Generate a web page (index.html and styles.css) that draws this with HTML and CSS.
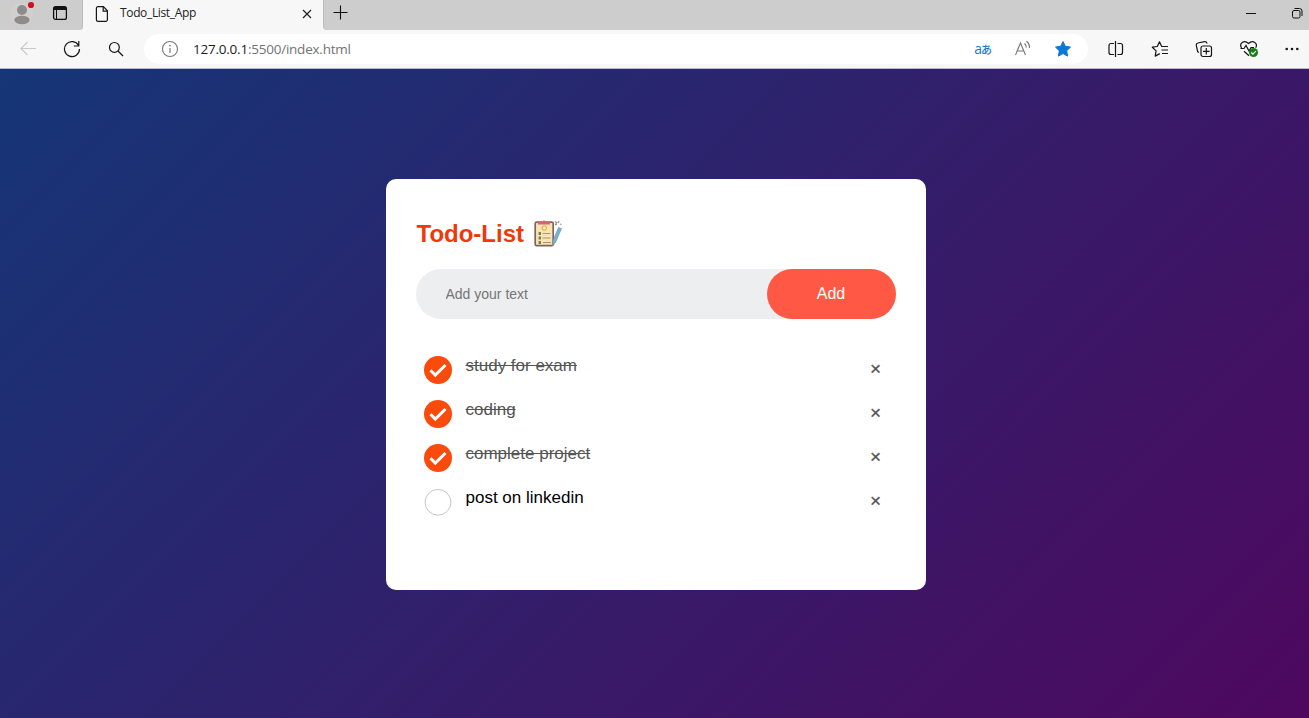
FILE: index.html
```html
<!DOCTYPE html>
<html lang="en">
<head>
<meta charset="utf-8">
<title>Todo_List_App</title>
<link rel="stylesheet" href="styles.css">
</head>
<body>
<header class="browser">
  <div class="tabstrip">
    <div class="strip-left">
      <svg class="avatar" width="28" height="28" viewBox="0 0 28 28"><circle cx="14" cy="14" r="11.5" fill="#d2d0ce"/><circle cx="14" cy="10" r="5" fill="#8f8b88"/><ellipse cx="14" cy="20" rx="7.7" ry="4.200" fill="#8f8b88"/><circle cx="23" cy="5" r="3.1" fill="#d30f1d"/></svg>
      <svg class="workspace" width="16" height="16" viewBox="0 0 16 16"><rect x="1.600" y="1.600" width="12.800" height="12.800" rx="2" fill="none" stroke="#111" stroke-width="1.300"/><path d="M1.500 5V3.500a2 2 0 0 1 2-2h9a2 2 0 0 1 2 2V5z" fill="#111"/><path d="M4.500 5v9.500" stroke="#111"/></svg>
    </div>
    <div class="tab">
      <svg width="14" height="18" viewBox="0 0 14 18" fill="none" stroke="#161616" stroke-width="1.200"><path d="M3 1.600h5.400l4 4.200v9a1.600 1.600 0 0 1-1.600 1.600H3a1.600 1.600 0 0 1-1.600-1.600V3.200A1.600 1.600 0 0 1 3 1.600z"/><path d="M8.200 1.800v4.400h4.200"/></svg>
      <span class="tab-title">Todo_List_App</span>
      <svg class="tab-close" width="10" height="10" viewBox="0 0 10 10"><path d="M1 1l8 8M9 1l-8 8" stroke="#222" stroke-width="1.200"/></svg>
    </div>
    <div class="strip-right">
      <svg width="16" height="16" viewBox="0 0 16 16"><path d="M8.500 1.500v14M1.500 8.500h14" stroke="#111" stroke-width="1.100"/></svg>
      <svg class="minimize" width="10" height="10" viewBox="0 0 10 10"><path d="M0 5.500h10" stroke="#111"/></svg>
      <svg class="restore" width="12" height="12" viewBox="0 0 12 12" fill="none" stroke="#111"><rect x="1.500" y="3.500" width="7.500" height="7.500" rx="1.500"/><path d="M3.500 1.500h5a2.500 2.500 0 0 1 2.500 2.500v5"/></svg>
    </div>
  </div>
  <div class="toolbar">
    <div class="nav">
      <svg width="18" height="18" viewBox="0 0 18 18" fill="none" stroke="#c8c8c8" stroke-width="1.100"><path d="M17 8.500H2M8.500 2L2 8.500 8.500 15"/></svg>
      <svg width="18" height="18" viewBox="0 0 18 18" fill="none" stroke="#161616" stroke-width="1.200"><path d="M15.600 5.500A7.500 7.500 0 1 0 16.500 9M15.800 1v5h-5"/></svg>
      <svg class="search" width="16" height="16" viewBox="0 0 16 16" fill="none" stroke="#161616" stroke-width="1.200"><circle cx="6.400" cy="6.400" r="4.900"/><path d="M10 10l5 5"/></svg>
    </div>
    <div class="address">
      <svg width="18" height="18" viewBox="0 0 18 18"><circle cx="9" cy="9" r="7.500" fill="none" stroke="#777" stroke-width="1.100"/><path d="M9 8v5" stroke="#777" stroke-width="1.200"/><circle cx="9" cy="5.600" r=".9" fill="#777"/></svg>
      <span class="url">127.0.0.1<span class="url-rest">:5500/index.html</span></span>
      <span class="translate">a<span class="kana">あ</span></span>
      <svg class="read-aloud" width="18" height="18" viewBox="0 0 18 18" fill="none" stroke="#777" stroke-width="1.100"><path d="M1.500 15L6.500 3l5 12M3 11h7M10.500 3.500q1.900 1.600 1.700 4M12.500 1.200q3.400 2.600 2.900 6.800"/></svg>
      <svg class="favorite" width="18" height="18" viewBox="0 0 18 18"><path d="M9 1.500l2.300 4.800 5.200.8-3.800 3.700.9 5.300L9 13.600l-4.600 2.500.9-5.300L1.500 7.100l5.200-.8z" fill="#0a78d4" stroke="#0a78d4" stroke-linejoin="round"/></svg>
    </div>
    <div class="actions">
      <svg width="18" height="18" viewBox="0 0 18 18" fill="none" stroke="#161616" stroke-width="1.200"><path d="M7 3.500H4a2 2 0 0 0-2 2v7a2 2 0 0 0 2 2h3M10.500 3.500h3a2 2 0 0 1 2 2v7a2 2 0 0 1-2 2h-3M8.500 1v16"/></svg>
      <svg width="18" height="18" viewBox="0 0 18 18" fill="none" stroke="#161616" stroke-width="1.200" stroke-linejoin="round"><path d="M12.500 6.500H10.700L8.500 1.800 6.300 6.500 1.300 7.200l3.800 3.700-.9 5.200 4.600-2.500M11 6.500h6M10.500 10H17M11 13.500h6"/></svg>
      <svg width="18" height="18" viewBox="0 0 18 18" fill="none" stroke="#161616" stroke-width="1.200"><path d="M4 12.500A2 2 0 0 1 2.500 11L1.300 5.400a2 2 0 0 1 1.600-2.400l6.600-1.400A2 2 0 0 1 12 3.500"/><rect x="6" y="6" width="10.500" height="10.500" rx="2"/><path d="M11.300 8v6.600M8 11.300h6.600"/></svg>
      <svg width="20" height="20" viewBox="0 0 20 20" fill="none" stroke="#161616" stroke-width="1.200"><path d="M2.500 9C-.2 4.500 5 .2 9.500 4.500 14 .2 19.200 4.500 16.700 8.700M5 12.300l5 4.500M1.500 9.500H5l2-3 3 5.500 2-3.500h3"/><circle cx="14.500" cy="13.500" r="4.500" fill="#128018" stroke="none"/><path d="M12.300 13.500l1.600 1.600 3-3" stroke="#fff"/></svg>
      <svg width="16" height="16" viewBox="0 0 16 16" fill="#161616"><circle cx="1.700" cy="8" r="1.300"/><circle cx="7" cy="8" r="1.300"/><circle cx="12.300" cy="8" r="1.300"/></svg>
    </div>
  </div>
</header>
<main class="page">
  <section class="todo-app">
    <h2 class="heading">Todo-List
      <svg width="30" height="30" viewBox="0 0 30 30"><rect x="2.200" y="3.200" width="18" height="23.500" rx="1.500" fill="#f8e3b4" stroke="#7d655b" stroke-width="1.700"/><path d="M5 4.500V3h3q3-3 6 0h3v2.500H5z" fill="#e0606c"/><circle cx="11.300" cy="9" r="2.200" fill="#fff0a0" stroke="#c6a948"/><path d="M9.500 14.500h8M9.500 19h8M10 23.500h8" stroke="#aa9475" stroke-width="1.100"/><path d="M6.800 13v3M6.800 17.500v3M6.800 22v3" stroke="#7c7e50" stroke-width="2.400"/><path d="M25.500 8.500l3 1-6 14-3 2.500.5-4.500z" fill="#78b2ce" stroke="#5a91ab" stroke-width=".6"/><path d="M19.700 23.500l-.5 3.500 2.500-2z" fill="#b88959"/><path d="M22 2.500l2 1.500M26 2l-1 2M22 5.500l2-.5M27 5l1.500.5" stroke="#9c8d80" stroke-width="1.300"/></svg>
    </h2>
    <div class="row">
      <input class="task-input" type="text" placeholder="Add your text">
      <button class="add-button">Add</button>
    </div>
    <ul class="tasks">
      <li class="task checked"><svg class="mark" width="28" height="28" viewBox="0 0 28 28"><circle cx="14" cy="14" r="14" fill="#fa4a0c"/><path d="M6.500 14.200l4.800 4.900L21.500 9" fill="none" stroke="#fff" stroke-width="3"/></svg><span class="label">study for exam</span><span class="remove">×</span></li>
      <li class="task checked"><svg class="mark" width="28" height="28" viewBox="0 0 28 28"><circle cx="14" cy="14" r="14" fill="#fa4a0c"/><path d="M6.500 14.200l4.800 4.900L21.500 9" fill="none" stroke="#fff" stroke-width="3"/></svg><span class="label">coding</span><span class="remove">×</span></li>
      <li class="task checked"><svg class="mark" width="28" height="28" viewBox="0 0 28 28"><circle cx="14" cy="14" r="14" fill="#fa4a0c"/><path d="M6.500 14.200l4.800 4.900L21.500 9" fill="none" stroke="#fff" stroke-width="3"/></svg><span class="label">complete project</span><span class="remove">×</span></li>
      <li class="task"><svg class="mark" width="28" height="28" viewBox="0 0 28 28"><circle cx="14" cy="14.300" r="12.900" fill="#fff" stroke="#c6c6c6"/></svg><span class="label">post on linkedin</span><span class="remove">×</span></li>
    </ul>
  </section>
</main>
</body>
</html>
```
FILE: styles.css
```css
* { box-sizing: border-box; margin: 0; padding: 0; }
body {
  display: flex;
  flex-direction: column;
  height: 718px;
  overflow: hidden;
  font-family: "Liberation Sans", Arial, sans-serif;
}
svg { display: block; flex: none; }

.browser {
  height: 69px;
  background: #f7f7f7;
  border-bottom: 1px solid #b9b9cc;
  font-family: "Open Sans", "Noto Sans", sans-serif;
}
.tabstrip { display: flex; height: 30px; }
.strip-left, .strip-right { display: flex; background: #cdcdcd; }
.strip-left { width: 83px; border-radius: 0 0 4px 0; border-right: 1px solid #bdbdbd; }
.avatar { margin-left: 8px; }
.workspace { margin: 5px 0 0 16px; }
.tab { display: flex; align-items: center; width: 240px; height: 27px; padding: 0 11px 0 12px; }
.tab-title { flex: 1; margin: -2px 0 0 11px; font-size: 12px; letter-spacing: -0.35px; color: #222; }
.strip-right { flex: 1; padding: 4px 0 0 8px; border-radius: 0 0 0 4px; border-left: 1px solid #bdbdbd; }
.minimize { margin: 4px 0 0 auto; }
.restore { margin: 3px 6px 0 35px; }

.toolbar { display: flex; align-items: center; height: 38px; }
.nav { display: flex; align-items: center; gap: 26px; width: 144px; padding-left: 19px; }
.search { margin-left: 1px; }
.address {
  display: flex;
  align-items: center;
  width: 944px;
  height: 30px;
  padding: 0 16px 0 17px;
  border-radius: 15px;
  background: #fff;
}
.url { flex: 1; margin-left: 14px; font-size: 13.5px; letter-spacing: -0.23px; color: #1b1b1b; }
.url-rest { color: #737373; }
.translate { display: flex; align-items: center; margin: -1px 22px 0 0; font-size: 14px; line-height: 18px; color: #1679c9; }
.kana { margin-left: -1px; font: 500 11px/18px "Noto Sans CJK JP", sans-serif; }
.read-aloud { margin-right: 22px; }
.actions { display: flex; align-items: center; gap: 26px; margin-left: 19px; }

.page {
  flex: 1;
  padding: 110px 0 0 386px;
  background: linear-gradient(135deg, #153677, #4e085f);
}
.todo-app { width: 540px; height: 411px; padding: 40px 30px 70px; border-radius: 10px; background: #fff; }
.heading { display: flex; align-items: center; gap: 8.5px; height: 30px; padding-left: 0.5px; color: #f0390b; font-size: 24px; }
.row {
  display: flex;
  height: 50px;
  margin: 20px 0 25px;
  border-radius: 30px;
  background: #edeef0;
}
.task-input {
  flex: 1;
  min-width: 0;
  padding: 0 0 0 29.5px;
  border: 0;
  outline: 0;
  background: transparent;
  font: 14px "Liberation Sans", Arial, sans-serif;
}
.task-input::placeholder { color: #757575; }
.add-button {
  width: 129px;
  padding-right: 1px;
  border: 0;
  border-radius: 40px;
  background: #ff5945;
  color: #fff;
  font: 16px "Liberation Sans", Arial, sans-serif;
}
.tasks { list-style: none; }
.task { display: flex; height: 44px; padding: 12px 10.5px 0 8px; }
.label { flex: 1; margin-left: 13.5px; font-size: 17px; line-height: 19px; color: #000; }
.checked .label { color: #555; text-decoration: line-through; }
.remove { width: 20px; height: 20px; margin-top: 2px; color: #555; font-size: 19px; line-height: 22px; text-align: center; -webkit-text-stroke: 0.3px #555; }
```
